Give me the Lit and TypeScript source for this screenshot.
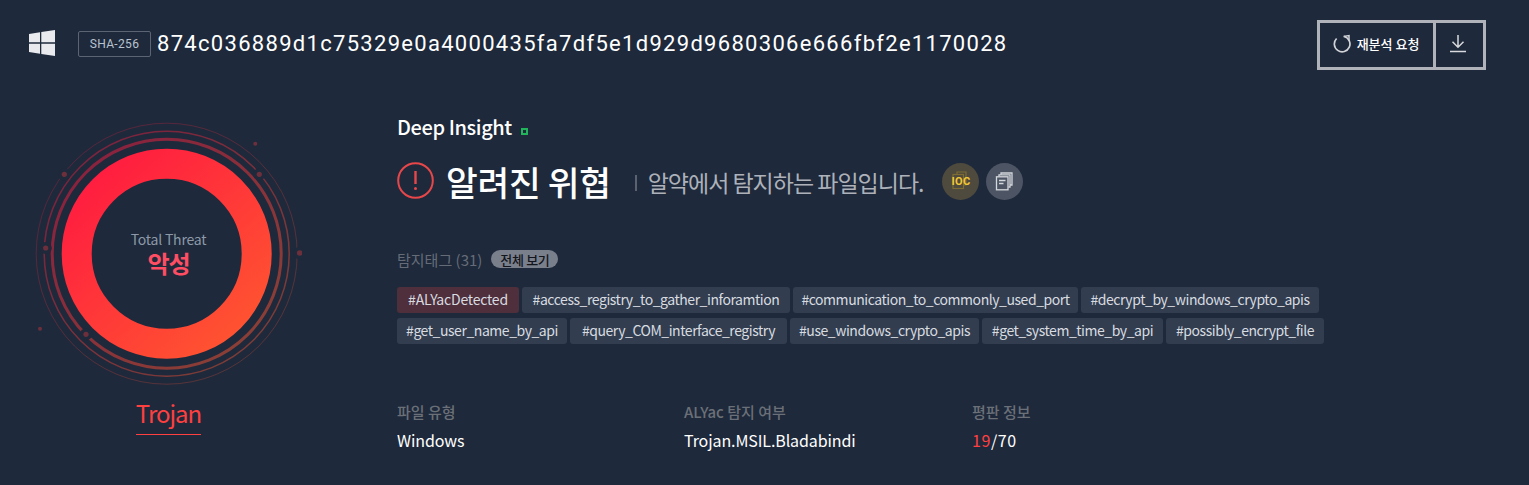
import { LitElement, html, css, svg } from "lit";
import { customElement } from "lit/decorators.js";

const TAGS = [
  ["#ALYacDetected", 122, true],
  ["#access_registry_to_gather_inforamtion", 268, false],
  ["#communication_to_commonly_used_port", 285, false],
  ["#decrypt_by_windows_crypto_apis", 238, false],
  ["#get_user_name_by_api", 170, false],
  ["#query_COM_interface_registry", 217, false],
  ["#use_windows_crypto_apis", 189, false],
  ["#get_system_time_by_api", 181, false],
  ["#possibly_encrypt_file", 158, false],
] as [string, number, boolean][];

const DOTS = [
  [223.3, 21.7, 2, 0],
  [227.3, 52.3, 2.6, 3.5],
  [267.7, 131, 2.8, 3.5],
  [32.3, 52.3, 2.6, 3.5],
  [13.7, 126, 2.6, 3.5],
  [54, 212.3, 2.6, 3.5],
  [8, 206.7, 2, 0],
];

@customElement("app-root")
export class AppRoot extends LitElement {
  static styles = css`
    :host {
      display: block;
      height: 485px;
      overflow: hidden;
      background: #1e293b;
      color: #fff;
      font-family: "Noto Sans CJK KR", "Noto Sans", sans-serif;
    }
    .header {
      display: flex;
      align-items: center;
      height: 50px;
      padding: 20px 43px 0 29px;
    }
    .win { width: 26px; height: 26px; margin-right: 23px; margin-top: -5px; flex: none; }
    .badge {
      box-sizing: border-box;
      width: 73px;
      height: 26px;
      border: 1px solid #5a6472;
      border-radius: 2px;
      display: flex;
      align-items: center;
      justify-content: center;
      margin-right: 6px;
      margin-top: -3px;
      font: 12px "Roboto", sans-serif;
      letter-spacing: 0.35px;
      color: #b9c3cf;
    }
    .hash {
      flex: 1;
      font: 22px "Roboto", sans-serif;
      letter-spacing: 1.3px;
      color: #fff;
      margin-top: -4px;
    }
    .btns {
      box-sizing: border-box;
      display: flex;
      height: 50px;
      border: 3px solid #b0b4ba;
      flex: none;
    }
    .re {
      box-sizing: border-box;
      width: 116px;
      display: flex;
      align-items: center;
      justify-content: center;
      gap: 5px;
      border-right: 3px solid #b0b4ba;
      font-size: 13px;
      font-weight: 500;
      padding-bottom: 4px;
      padding-right: 1px;
    }
    .dl {
      box-sizing: border-box;
      width: 47px;
      padding: 0 4px 4px 0;
      display: flex;
      align-items: center;
      justify-content: center;
    }
    .main { display: flex; padding-top: 52px; }
    .left {
      box-sizing: border-box;
      width: 397px;
      padding-left: 32px;
      flex: none;
    }
    .gauge { position: relative; width: 270px; height: 270px; }
    .gauge svg { display: block; }
    .center {
      position: absolute;
      left: 3px;
      right: 0;
      top: 107px;
      text-align: center;
    }
    .tt { font-size: 14px; line-height: 20px; color: #8d99a8; letter-spacing: -0.2px; }
    .mal { font-size: 24px; line-height: 28px; font-weight: 700; color: #ff4d63; letter-spacing: -1px; }
    .trojan-wrap { width: 273px; display: flex; justify-content: center; margin-top: 3px; }
    .trojan {
      font-size: 24px;
      line-height: 36px;
      color: #ff4040;
      border-bottom: 1px solid #ff4040;
      padding-bottom: 3px;
      letter-spacing: -1px;
    }
    .right { flex: 1; min-width: 0; }
    .di {
      display: flex;
      align-items: center;
      height: 26px;
      margin-top: -9px;
      font-size: 20px;
      font-weight: 500;
      letter-spacing: -0.4px;
    }
    .sq {
      box-sizing: border-box;
      width: 7px;
      height: 7px;
      border: 2px solid #22b45a;
      margin: 11px 0 0 9px;
    }
    .title {
      display: flex;
      align-items: center;
      height: 40px;
      margin-top: 22px;
    }
    .alert { width: 38px; height: 38px; margin-right: 11px; flex: none; }
    .h {
      font-size: 34.5px;
      font-weight: 500;
      letter-spacing: -0.3px;
      line-height: 40px;
    }
    .sep { width: 2px; height: 16px; background: #5a6270; margin: 4px 11px 0 24px; }
    .sub {
      font-size: 23px;
      color: #adb1b9;
      letter-spacing: -1px;
      margin-top: 2px;
    }
    .circ {
      width: 37px;
      height: 37px;
      border-radius: 50%;
      margin-left: 7px;
      position: relative;
      display: flex;
      align-items: center;
      justify-content: center;
      flex: none;
    }
    .ioc { background: #4e4a3d; margin-left: 19px; }
    .ioc svg { position: absolute; left: 8px; top: 8px; }
    .ioc span {
      position: relative;
      font: 700 11px "Roboto", sans-serif;
      color: #f2c733;
      letter-spacing: 0.3px;
    }
    .copy { background: #4d5564; }
    .tl {
      display: flex;
      align-items: center;
      height: 20px;
      margin-top: 48px;
      font-size: 15px;
      color: #656c78;
    }
    .pill {
      margin-left: 9px;
      height: 18px;
      width: 67px;
      border-radius: 9px;
      background: #7a7f8c;
      color: #12151b;
      font-size: 13px;
      font-weight: 500;
      display: flex;
      align-items: center;
      justify-content: center;
      letter-spacing: -0.3px;
    }
    .tags {
      display: flex;
      flex-wrap: wrap;
      gap: 5px 3px;
      width: 960px;
      margin-top: 18px;
    }
    .tag {
      height: 26px;
      line-height: 25px;
      text-align: center;
      white-space: nowrap;
      font-size: 14px;
      border-radius: 3px;
      background: #323e4f;
      color: #d8dbe0;
      letter-spacing: -0.45px;
    }
    .tag.hot { background: #4f2f3b; letter-spacing: -0.2px; }
    .info { display: flex; margin-top: 58px; }
    .col:nth-child(1) { width: 287px; }
    .col:nth-child(2) { width: 288px; }
    .lab { font-size: 15px; line-height: 20px; color: #6b7078; font-weight: 500; }
    .val { font-size: 16px; line-height: 22px; margin-top: 7px; color: #fff; letter-spacing: -0.1px; }
    .val.num { letter-spacing: 0.6px; }
    .val b { font-weight: 400; color: #ff4040; }
  `;

  render() {
    const dots = DOTS.map(([x, y, r, g]) => svg`
      ${g ? svg`<circle cx=${x} cy=${y} r=${r + g} fill="#1e293b"></circle>` : ""}
      <circle cx=${x} cy=${y} r=${r} fill="#ff3b3b" opacity=".35"></circle>`);
    return html`
      <div class="header">
        <svg class="win" viewBox="0 0 26 26" fill="#e8eaed"><path d="M0 4 11 2.300V12.300H0ZM12.300 2.100 26 0V12.300H12.300ZM0 13.700H11V23.700L0 22ZM12.300 13.700H26V26L12.300 23.900Z"/></svg>
        <div class="badge">SHA-256</div>
        <div class="hash">874c036889d1c75329e0a4000435fa7df5e1d929d9680306e666fbf2e1170028</div>
        <div class="btns">
          <div class="re">
            <svg width="19" height="20" viewBox="0 0 19 20" fill="none" stroke="#d0d3d7" stroke-width="1.700"><path d="M11 3.400A7.800 7.800 0 1 1 3.600 5.500"/><path d="M10.500 3.400 16 2.600V8" stroke-width="1.500"/></svg>
            <span>재분석 요청</span>
          </div>
          <div class="dl">
            <svg width="18" height="19" viewBox="0 0 18 19" fill="none" stroke="#d8dadd" stroke-width="1.500"><path d="M9 1V13M3.500 7.800 9 13.200 14.500 7.800M1 17.500H17"/></svg>
          </div>
        </div>
      </div>
      <div class="main">
        <div class="left">
          <div class="gauge">
            <svg width="270" height="270" viewBox="0 0 270 270" fill="none">
              <defs>
                <linearGradient id="g" gradientUnits="userSpaceOnUse" x1="60" y1="50" x2="210" y2="220">
                  <stop offset="0" stop-color="#ff1c40"></stop>
                  <stop offset="1" stop-color="#ff5530"></stop>
                </linearGradient>
              </defs>
              <circle cx="134.700" cy="131.700" r="130.500" stroke="url(#g)" stroke-width="1" opacity=".25"></circle>
              <circle cx="134.700" cy="131.700" r="122.500" stroke="url(#g)" stroke-width="1.500" opacity=".42"></circle>
              <circle cx="134.700" cy="131.700" r="114.500" stroke="url(#g)" stroke-width="3" opacity=".48"></circle>
              <circle cx="134.700" cy="131.700" r="90" stroke="url(#g)" stroke-width="30"></circle>
              ${dots}
            </svg>
            <div class="center">
              <div class="tt">Total Threat</div>
              <div class="mal">악성</div>
            </div>
          </div>
          <div class="trojan-wrap"><div class="trojan">Trojan</div></div>
        </div>
        <div class="right">
          <div class="di">Deep Insight<span class="sq"></span></div>
          <div class="title">
            <svg class="alert" viewBox="0 0 38 38" fill="none"><circle cx="18.500" cy="18.500" r="17.300" stroke="#e8474a" stroke-width="2"/><path d="M18.500 9V22" stroke="#e8474a" stroke-width="2.400"/><circle cx="18.500" cy="26.500" r="1.500" fill="#e8474a"/></svg>
            <div class="h">알려진 위협</div>
            <div class="sep"></div>
            <div class="sub">알약에서 탐지하는 파일입니다.</div>
            <div class="circ ioc">
              <svg width="21" height="21" viewBox="0 0 21 21" fill="none" stroke="#7d6c33" stroke-width="1.200"><path d="M7 3.500V1H16V14H13.500"/><rect x="3" y="3.500" width="10.500" height="14"/></svg>
              <span>IOC</span>
            </div>
            <div class="circ copy">
              <svg width="19" height="19" viewBox="0 0 19 19" fill="none" stroke="#d4d7dc" stroke-width="1.300"><path d="M6 2.800V1H17V13H15"/><path d="M4 4.200V2.800H15V15H13.500"/><rect x="1.500" y="4.800" width="11.500" height="13"/><path d="M4 8.500H10.500M4 11.500H8.500"/></svg>
            </div>
          </div>
          <div class="tl">탐지태그 (31)<span class="pill">전체 보기</span></div>
          <div class="tags">
            ${TAGS.map(([t, w, hot]) => html`<div class="tag ${hot ? "hot" : ""}" style="width:${w}px">${t}</div>`)}
          </div>
          <div class="info">
            <div class="col"><div class="lab">파일 유형</div><div class="val">Windows</div></div>
            <div class="col"><div class="lab">ALYac 탐지 여부</div><div class="val">Trojan.MSIL.Bladabindi</div></div>
            <div class="col"><div class="lab">평판 정보</div><div class="val num"><b>19</b>/70</div></div>
          </div>
        </div>
      </div>
    `;
  }
}
